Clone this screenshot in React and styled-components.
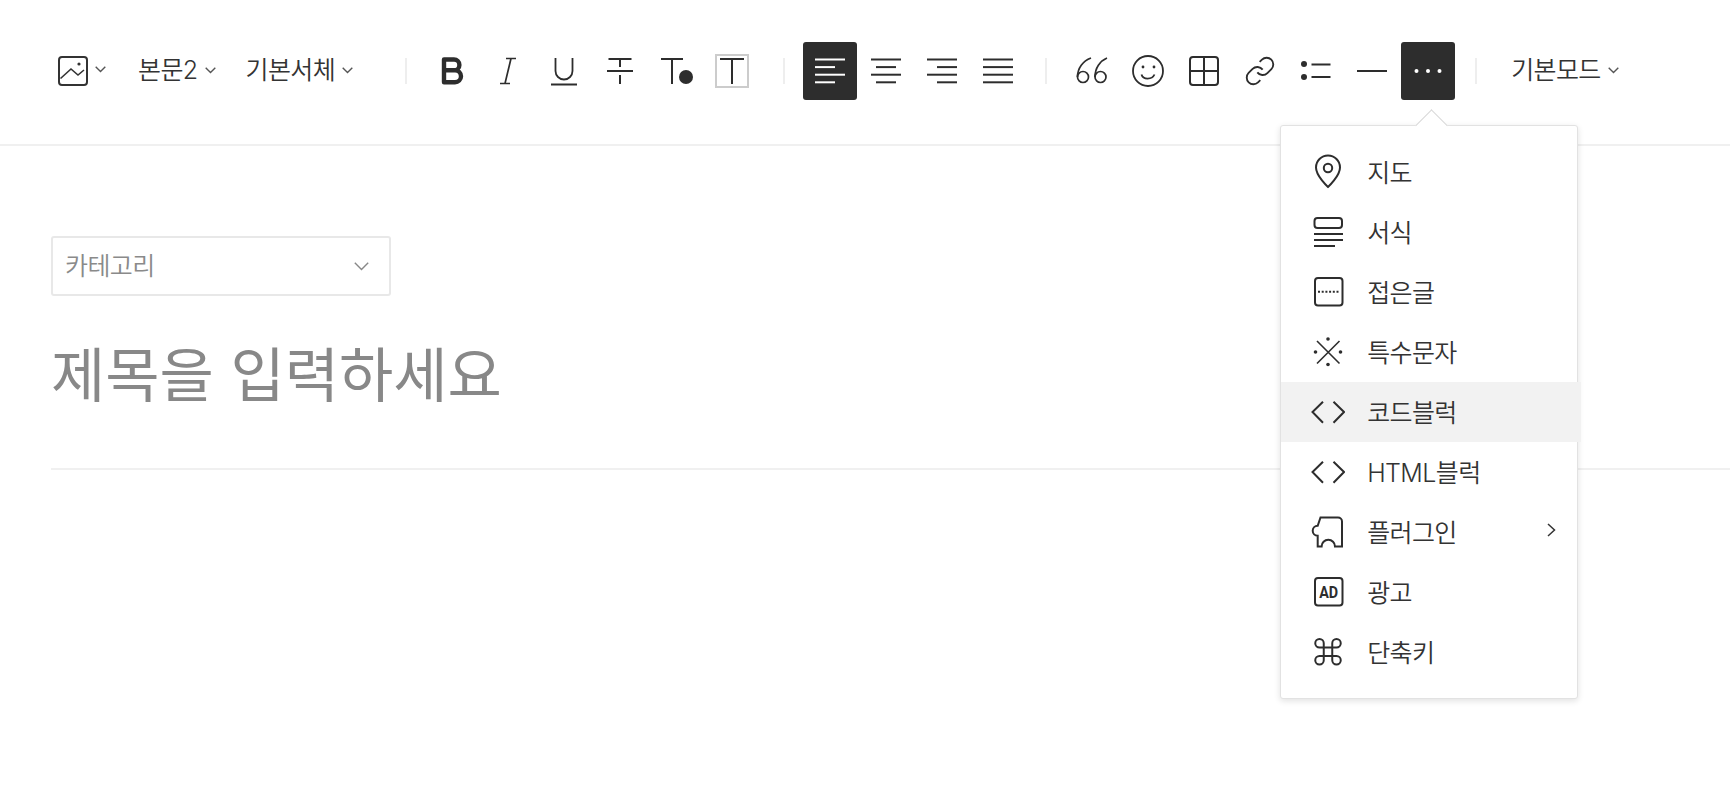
import React from "react";
import styled, { createGlobalStyle } from "styled-components";

const Global = createGlobalStyle`
  html, body {
    margin: 0;
    padding: 0;
    background: #fff;
    overflow: hidden;
  }
  body {
    font-family: Inter, "Noto Sans CJK KR", "Noto Sans", sans-serif;
    font-weight: 350;
    color: #333;
  }
`;

const Page = styled.div`
  width: 100%;
  min-height: 808px;
  background: #fff;
`;

const Toolbar = styled.div`
  display: flex;
  align-items: center;
  height: 142px;
  box-sizing: content-box;
  padding: 0 0 2px 58px;
  border-bottom: 2px solid #f0f0f0;
  color: #2d2d2d;
`;

const Dropdown = styled.div`
  display: flex;
  align-items: center;
  gap: 7px;
  margin-right: 30px;
  margin-left: ${(p) => p.$left || 0}px;
  padding-bottom: ${(p) => (p.$icon ? 0 : 2)}px;
  font-size: 25px;
  letter-spacing: -0.6px;
  line-height: 34px;
  color: #333;
  white-space: nowrap;

  ${(p) => p.$icon && "svg:last-child { margin-bottom: 4px; }"}
`;

const Separator = styled.span`
  flex: none;
  width: 2px;
  height: 26px;
  background: #eee;
  margin: 0 ${(p) => p.$r}px 0 ${(p) => p.$l}px;
`;

const IconButton = styled.button`
  flex: none;
  display: flex;
  align-items: center;
  justify-content: center;
  width: 54px;
  height: 58px;
  margin-right: 2px;
  padding: 0;
  border: 0;
  border-radius: 3px;
  background: ${(p) => (p.$active ? "#2d2d2d" : "transparent")};
  color: ${(p) => (p.$active ? "#fff" : "#2d2d2d")};
`;

const MoreWrap = styled.div`
  position: relative;
  display: flex;
  margin-right: -2px;
`;

const Popover = styled.div`
  position: absolute;
  top: 83px;
  left: -121px;
  z-index: 5;
  width: 298px;
  box-sizing: border-box;
  padding: 16px 0;
  background: #fff;
  border: 1px solid #e2e2e2;
  border-radius: 3px;
  box-shadow: 0 2px 6px rgba(0, 0, 0, 0.12);

  &::before {
    content: "";
    position: absolute;
    top: -12px;
    left: 139px;
    width: 22px;
    height: 22px;
    background: #fff;
    border-top: 1px solid #d8d8d8;
    border-left: 1px solid #d8d8d8;
    transform: rotate(45deg);
  }
`;

const MenuRow = styled.div`
  position: relative;
  display: flex;
  align-items: center;
  height: 60px;
  padding-left: 30px;
  margin-right: ${(p) => (p.$active ? "-4px" : "0")};
  background: ${(p) => (p.$active ? "#f2f2f2" : "transparent")};
  color: #2d2d2d;
`;

const MenuLabel = styled.span`
  margin-left: 22px;
  padding-bottom: 2px;
  font-size: 25px;
  letter-spacing: -0.6px;
  color: #333;
`;

const MoreArrow = styled.svg`
  position: absolute;
  right: 21px;
  top: 21px;
`;

const AdText = styled.text`
  font-family: Roboto, "Liberation Sans", sans-serif;
  font-size: 17px;
  font-weight: 700;
  fill: currentColor;
  stroke: none;
`;

const Editor = styled.div`
  padding: 90px 0 0 51px;
`;

const CategorySelect = styled.div`
  display: flex;
  align-items: center;
  justify-content: space-between;
  box-sizing: border-box;
  width: 340px;
  height: 60px;
  padding: 0 20px 4px 12px;
  border: 2px solid #e8e8e8;
  border-radius: 3px;
  font-size: 25px;
  letter-spacing: -0.6px;
  color: #8a8a8a;

  svg {
    margin-top: 4px;
  }
`;

const TitleBlock = styled.div`
  height: 174px;
  box-sizing: border-box;
  padding-top: 35px;
  border-bottom: 2px solid #f0f0f0;
  font-size: 59px;
  font-weight: 400;
  line-height: 90px;
  color: #888;
`;

const Chevron = () => (
  <svg width="11" height="7" viewBox="0 0 11 7" fill="none" stroke="#555" strokeWidth="1.4">
    <path d="M.7.8 5.5 5.6 10.3.8" />
  </svg>
);

const Icon = ({ w = 30, h = 30, sw = 2, children }) => (
  <svg width={w} height={h} viewBox={`0 0 ${w} ${h}`} fill="none" stroke="currentColor" strokeWidth={sw}>
    {children}
  </svg>
);

const alignLines = {
  left: [[0, 30], [0, 20], [0, 30], [0, 20]],
  center: [[0, 30], [5, 25], [0, 30], [5, 25]],
  right: [[0, 30], [10, 30], [0, 30], [10, 30]],
  justify: [[0, 30], [0, 30], [0, 30], [0, 30]],
};

const AlignIcon = ({ type }) => (
  <Icon>
    {alignLines[type].map(([a, b], i) => (
      <path key={i} d={`M${a} ${3.5 + i * 7.6}H${b}`} />
    ))}
  </Icon>
);

const menuItems = [
  {
    label: "지도",
    icon: (
      <>
        <path d="M17 33C17 33 5 22 5 13.5a12 12 0 0 1 24 0C29 22 17 33 17 33Z" />
        <circle cx="17" cy="14" r="4.2" />
      </>
    ),
  },
  {
    label: "서식",
    icon: (
      <>
        <rect x="3.5" y="4" width="27.5" height="10" rx="3" />
        <path d="M3 20H32M3 26H32M3 32H24" />
      </>
    ),
  },
  {
    label: "접은글",
    icon: (
      <>
        <rect x="4" y="4" width="27.5" height="27.5" rx="3" />
        <path d="M7 17.7H29" strokeDasharray="2 1.7" />
      </>
    ),
  },
  {
    label: "특수문자",
    icon: (
      <>
        <path d="M6 7 28.5 29.5M28.5 7 6 29.5" strokeWidth="1.6" />
        <g fill="currentColor" stroke="none">
          <circle cx="17" cy="5" r="1.8" />
          <circle cx="17" cy="30.5" r="1.8" />
          <circle cx="4.5" cy="18" r="1.8" />
          <circle cx="29.5" cy="18" r="1.8" />
        </g>
      </>
    ),
  },
  {
    label: "코드블럭",
    active: true,
    icon: <path d="M12 7.7 1.5 18 12 28.7M22.5 7.7 33 18 22.5 28.7" />,
  },
  {
    label: "HTML블럭",
    icon: <path d="M12 7.7 1.5 18 12 28.7M22.5 7.7 33 18 22.5 28.7" />,
  },
  {
    label: "플러그인",
    more: true,
    icon: (
      <path d="M9.5 3.5H27a4 4 0 0 1 4 4V32.5H24a6.7 6.7 0 0 0-13.4 0H6.7V21.7a5 5 0 0 1 0-10Z" />
    ),
  },
  {
    label: "광고",
    icon: (
      <>
        <rect x="4" y="4" width="27.5" height="27.5" rx="3" />
        <AdText x="17.7" y="24" textAnchor="middle" textLength="19" lengthAdjust="spacingAndGlyphs">
          AD
        </AdText>
      </>
    ),
  },
  {
    label: "단축키",
    icon: (
      <g transform="translate(0 .7) scale(1.417)" strokeWidth="1.4">
        <path d="M15 6v12a3 3 0 1 0 3-3H6a3 3 0 1 0 3 3V6a3 3 0 1 0-3 3h12a3 3 0 1 0-3-3" />
      </g>
    ),
  },
];

export default function App() {
  return (
    <Page>
      <Global />
      <Toolbar>
        <Dropdown $icon>
          <Icon>
            <rect x="1" y="1" width="28" height="28" rx="3" />
            <path d="M2.5 22.5 13 13l7 6 6-5" strokeWidth="1.6" />
            <circle cx="21" cy="8" r="1.6" fill="currentColor" stroke="none" />
          </Icon>
          <Chevron />
        </Dropdown>
        <Dropdown $left={2}>
          본문2
          <Chevron />
        </Dropdown>
        <Dropdown>
          기본서체
          <Chevron />
        </Dropdown>
        <Separator $l={22} $r={18} />

        <IconButton>
          <Icon sw={4.4}>
            <path strokeLinejoin="round" d="M7 3.5H17a5.3 5.3 0 0 1 0 10.8H7ZM7 14.3H18a6 6 0 0 1 0 12H7Z" />
          </Icon>
        </IconButton>
        <IconButton>
          <Icon sw={1.7}>
            <path d="M13 2.5H23M7 27.5H17M18 2.5 12 27.5" />
          </Icon>
        </IconButton>
        <IconButton>
          <Icon sw={1.8}>
            <path d="M6.5 2V15a8.5 8.5 0 0 0 17 0V2M2 28.5H28" />
          </Icon>
        </IconButton>
        <IconButton>
          <Icon>
            <path d="M3.5 3H26.5M2 15H28M15 3V11M15 19V28" />
          </Icon>
        </IconButton>
        <IconButton>
          <Icon w={34}>
            <path d="M2 3H24M13 3V28" />
            <circle cx="27" cy="21" r="7" fill="currentColor" stroke="none" />
          </Icon>
        </IconButton>
        <IconButton>
          <Icon w={34} h={34}>
            <rect x="1" y="1" width="32" height="32" stroke="#ccc" />
            <path d="M5 5H29M17 5V30" />
          </Icon>
        </IconButton>
        <Separator $l={22} $r={18} />

        <IconButton $active>
          <AlignIcon type="left" />
        </IconButton>
        <IconButton>
          <AlignIcon type="center" />
        </IconButton>
        <IconButton>
          <AlignIcon type="right" />
        </IconButton>
        <IconButton>
          <AlignIcon type="justify" />
        </IconButton>
        <Separator $l={18} $r={18} />

        <IconButton>
          <Icon w={32} sw={1.7}>
            <circle cx="7" cy="21" r="5.5" />
            <path d="M1.5 21C1.5 12 7 5 15 2" />
            <circle cx="24.5" cy="21" r="5.5" />
            <path d="M19 21C19 12 24 5 31 2" />
          </Icon>
        </IconButton>
        <IconButton>
          <Icon w={32} h={32} sw={1.8}>
            <circle cx="16" cy="16" r="15" />
            <path d="M9.5 19.5C11 25 20 25 22.5 19.5" />
            <circle cx="11" cy="12" r="1.4" fill="currentColor" stroke="none" />
            <circle cx="22" cy="12" r="1.4" fill="currentColor" stroke="none" />
          </Icon>
        </IconButton>
        <IconButton>
          <Icon>
            <rect x="1" y="1" width="28" height="28" rx="3" />
            <path d="M15 1V29M1 15H29" />
          </Icon>
        </IconButton>
        <IconButton>
          <svg width="32" height="32" viewBox="0 0 24 24" fill="none" stroke="currentColor" strokeWidth="1.4">
            <path d="M10 13a5 5 0 0 0 7.54.54l3-3a5 5 0 0 0-7.07-7.07l-1.72 1.71" />
            <path d="M14 11a5 5 0 0 0-7.54-.54l-3 3a5 5 0 0 0 7.07 7.07l1.71-1.71" />
          </svg>
        </IconButton>
        <IconButton>
          <Icon>
            <circle cx="3" cy="8" r="3" fill="currentColor" stroke="none" />
            <circle cx="3" cy="21" r="3" fill="currentColor" stroke="none" />
            <path d="M10.5 8.5H29.5M10.5 21H29.5" />
          </Icon>
        </IconButton>
        <IconButton>
          <Icon>
            <path d="M0 15H30" />
          </Icon>
        </IconButton>
        <MoreWrap>
          <IconButton $active>
            <Icon>
              <g fill="currentColor" stroke="none">
                <circle cx="3.5" cy="15" r="2" />
                <circle cx="15" cy="15" r="2" />
                <circle cx="26.5" cy="15" r="2" />
              </g>
            </Icon>
          </IconButton>
          <Popover>
            {menuItems.map((item) => (
              <MenuRow key={item.label} $active={item.active}>
                <Icon w={34} h={36}>
                  {item.icon}
                </Icon>
                <MenuLabel>{item.label}</MenuLabel>
                {item.more && (
                  <MoreArrow width="9" height="14" viewBox="0 0 9 14" fill="none" stroke="#333" strokeWidth="1.5">
                    <path d="M1 1 7.5 7 1 13" />
                  </MoreArrow>
                )}
              </MenuRow>
            ))}
          </Popover>
        </MoreWrap>
        <Separator $l={20} $r={17} />
        <Dropdown $left={17}>
          기본모드
          <Chevron />
        </Dropdown>
      </Toolbar>

      <Editor>
        <CategorySelect>
          카테고리
          <svg width="15" height="9" viewBox="0 0 15 9" fill="none" stroke="#888" strokeWidth="1.4">
            <path d="M.8.8 7.5 7.6 14.2.8" />
          </svg>
        </CategorySelect>
        <TitleBlock>제목을 입력하세요</TitleBlock>
      </Editor>
    </Page>
  );
}
